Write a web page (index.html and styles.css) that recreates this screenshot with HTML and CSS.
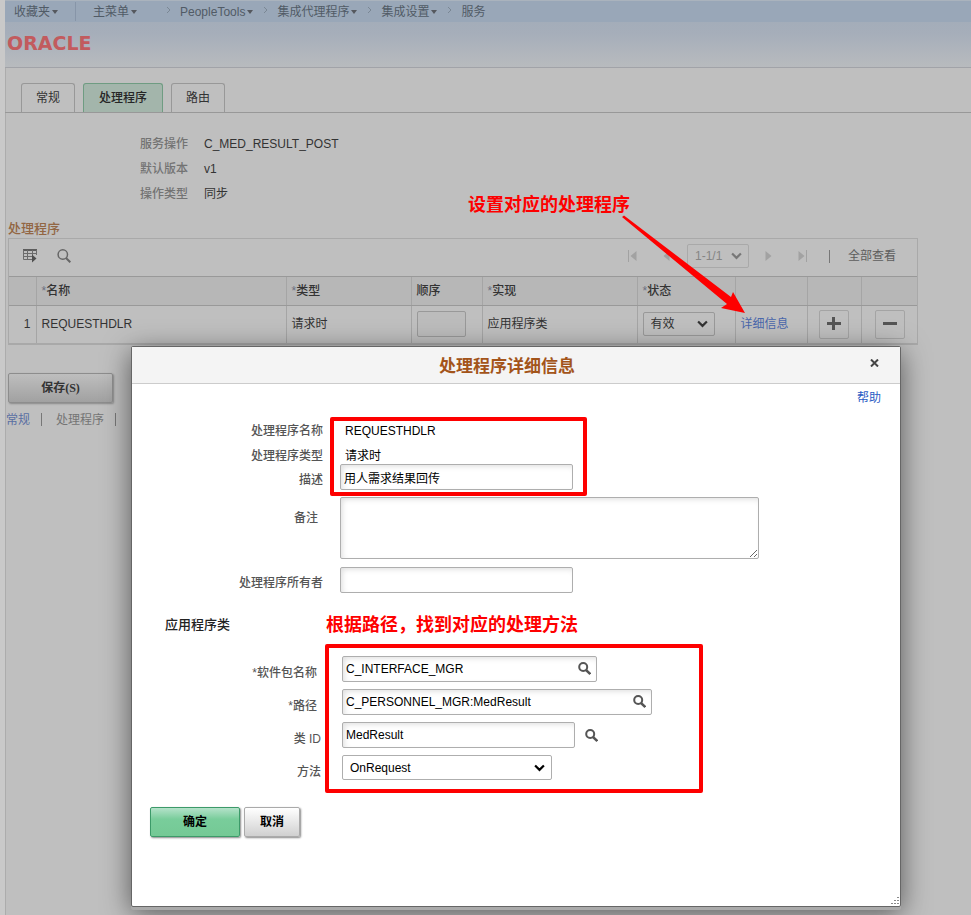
FILE: index.html
```html
<!DOCTYPE html>
<html lang="zh-CN">
<head>
<meta charset="utf-8">
<title>服务操作 - 处理程序</title>
<link rel="stylesheet" href="styles.css">
</head>
<body>
<div class="page">
  <header class="banner">
    <nav class="crumbs">
      <a class="crumb crumb-fav" href="#">收藏夹<i class="caret"></i></a>
      <a class="crumb crumb-main" href="#">主菜单<i class="caret"></i></a>
      <svg class="sep" viewBox="0 0 5 8"><path d="M1 1l3 3-3 3"/></svg>
      <a class="crumb" href="#">PeopleTools<i class="caret"></i></a>
      <svg class="sep" viewBox="0 0 5 8"><path d="M1 1l3 3-3 3"/></svg>
      <a class="crumb" href="#">集成代理程序<i class="caret"></i></a>
      <svg class="sep" viewBox="0 0 5 8"><path d="M1 1l3 3-3 3"/></svg>
      <a class="crumb" href="#">集成设置<i class="caret"></i></a>
      <svg class="sep" viewBox="0 0 5 8"><path d="M1 1l3 3-3 3"/></svg>
      <a class="crumb" href="#">服务</a>
    </nav>
    <div class="logo">ORACLE</div>
  </header>

  <nav class="tabs">
    <a class="tab" href="#">常规</a>
    <a class="tab tab-active" href="#">处理程序</a>
    <a class="tab" href="#">路由</a>
  </nav>

  <main class="content">
    <dl class="summary">
      <dt>服务操作</dt><dd>C_MED_RESULT_POST</dd>
      <dt>默认版本</dt><dd>v1</dd>
      <dt>操作类型</dt><dd>同步</dd>
    </dl>

    <h2 class="grid-title">处理程序</h2>
    <section class="grid-box">
      <div class="toolbar">
        <button class="icon-btn" aria-label="网格操作">
          <svg width="14" height="14" viewBox="0 0 14 14"><path fill="#5d5d5d" d="M0 0h14v2H0z"/><path d="M.5 1v9.500h9M.5 4.500h13M.5 7.500h9M4.500 1v9.500M9.500 1v6M13.500 1v5" fill="none" stroke="#6c6c6c"/><path fill="#4f4f4f" d="M9 5.500l4.500 4-4.500 4z"/></svg>
        </button>
        <button class="icon-btn" aria-label="查找">
          <svg width="14" height="14" viewBox="0 0 14 14" fill="none" stroke="#666" stroke-width="1.500"><circle cx="5.800" cy="5.500" r="4.700"/><path d="M9 9l4.300 4.300" stroke-width="2"/></svg>
        </button>
        <div class="pager">
          <button class="icon-btn" aria-label="第一页" disabled><svg width="9" height="12" viewBox="0 0 9 12" fill="#a2a2a2"><path d="M0 0h1v12H0zM8.500 1v10L2.500 6z"/></svg></button>
          <button class="icon-btn" aria-label="上一页" disabled><svg width="7" height="12" viewBox="0 0 7 12" fill="#a2a2a2"><path d="M6.500 1v10L.5 6z"/></svg></button>
          <span class="select select-page">
            <select aria-label="行范围" disabled><option>1-1/1</option></select>
            <svg class="chev" viewBox="0 0 10 7"><path d="M1 1.200l4 4 4-4"/></svg>
          </span>
          <button class="icon-btn" aria-label="下一页" disabled><svg width="7" height="12" viewBox="0 0 7 12" fill="#a2a2a2"><path d="M.5 1v10l6-5z"/></svg></button>
          <button class="icon-btn" aria-label="最后一页" disabled><svg width="9" height="12" viewBox="0 0 9 12" fill="#a2a2a2"><path d="M8 0h1v12H8zM.5 1v10l6-5z"/></svg></button>
          <i class="bar"></i>
          <span class="view-all">全部查看</span>
        </div>
      </div>
      <table class="grid">
        <colgroup><col class="c-num"><col><col class="c-type"><col class="c-seq"><col class="c-impl"><col class="c-status"><col class="c-detail"><col class="c-add"><col class="c-del"></colgroup>
        <thead>
          <tr><th></th><th><i class="req">*</i>名称</th><th><i class="req">*</i>类型</th><th>顺序</th><th><i class="req">*</i>实现</th><th><i class="req">*</i>状态</th><th></th><th></th><th></th></tr>
        </thead>
        <tbody>
          <tr>
            <td class="num">1</td><td>REQUESTHDLR</td><td>请求时</td>
            <td><input class="seq" type="text" aria-label="顺序"></td>
            <td>应用程序类</td>
            <td><span class="select select-status"><select aria-label="状态"><option>有效</option></select><svg class="chev" viewBox="0 0 10 7"><path d="M1 1.200l4 4 4-4"/></svg></span></td>
            <td><a class="detail" href="#">详细信息</a></td>
            <td class="act"><button class="row-btn" aria-label="添加行"><svg width="14" height="14" viewBox="0 0 14 14"><path fill="#555" d="M5 0h3v5h6v3H8v5H5V8H0V5h5z"/></svg></button></td>
            <td class="act"><button class="row-btn" aria-label="删除行"><svg width="14" height="14" viewBox="0 0 14 14"><path fill="#555" d="M0 5h14v3H0z"/></svg></button></td>
          </tr>
        </tbody>
      </table>
    </section>

    <button class="save">保存(S)</button>
    <nav class="foot-links"><a href="#">常规</a><i class="bar"></i><span>处理程序</span><i class="bar"></i></nav>
  </main>
</div>

<section class="dialog" role="dialog" aria-labelledby="dlg-title">
  <header class="dlg-head">
    <h1 id="dlg-title">处理程序详细信息</h1>
    <button class="close" aria-label="关闭"><svg width="9" height="8" viewBox="0 0 9 8"><path d="M1 .5l7 7M8 .5l-7 7" stroke="#444" stroke-width="2"/></svg></button>
  </header>
  <div class="help"><a href="#">帮助</a></div>
  <form class="form">
    <div class="row row-text"><span class="label">处理程序名称</span><span class="value">REQUESTHDLR</span></div>
    <div class="row row-text"><span class="label">处理程序类型</span><span class="value">请求时</span></div>
    <div class="row row-desc"><label class="label" for="desc">描述</label><input class="field w-mid" id="desc" type="text" value="用人需求结果回传"></div>
    <div class="row row-notes"><label class="label label-notes" for="notes">备注</label><textarea class="field notes" id="notes"></textarea></div>
    <div class="row"><label class="label" for="owner">处理程序所有者</label><input class="field w-mid" id="owner" type="text"></div>

    <div class="section-line"><h2>应用程序类</h2><strong class="note">根据路径，找到对应的处理方法</strong></div>

    <div class="class-fields">
      <div class="row"><label class="label label-req" for="pkg">*软件包名称</label><span class="lookup w-pkg"><input class="field" id="pkg" type="text" value="C_INTERFACE_MGR"><button type="button" class="icon-btn look" aria-label="查找软件包"><svg width="13" height="13" viewBox="0 0 13 13" fill="none" stroke="#555"><circle cx="5.200" cy="5" r="4" stroke-width="2"/><path d="M8 8l4.300 4" stroke-width="2.400"/></svg></button></span></div>
      <div class="row"><label class="label label-req" for="path">*路径</label><span class="lookup w-path"><input class="field" id="path" type="text" value="C_PERSONNEL_MGR:MedResult"><button type="button" class="icon-btn look" aria-label="查找路径"><svg width="13" height="13" viewBox="0 0 13 13" fill="none" stroke="#555"><circle cx="5.200" cy="5" r="4" stroke-width="2"/><path d="M8 8l4.300 4" stroke-width="2.400"/></svg></button></span></div>
      <div class="row"><label class="label" for="cls">类 ID</label><input class="field w-mid" id="cls" type="text" value="MedResult"><button type="button" class="icon-btn look-out" aria-label="查找类"><svg width="13" height="13" viewBox="0 0 13 13" fill="none" stroke="#555"><circle cx="5.200" cy="5" r="4" stroke-width="2"/><path d="M8 8l4.300 4" stroke-width="2.400"/></svg></button></div>
      <div class="row"><label class="label" for="method">方法</label><span class="select select-method"><select id="method"><option>OnRequest</option></select><svg class="chev" viewBox="0 0 10 7"><path d="M1 1.200l4 4 4-4"/></svg></span></div>
    </div>

    <div class="buttons"><button type="button" class="btn ok">确定</button><button type="button" class="btn cancel">取消</button></div>
  </form>
  <div class="mark mark-desc"></div>
  <div class="mark mark-class"></div>
  <svg class="grip" width="9" height="9" viewBox="0 0 9 9" fill="#8a8a8a"><path d="M7 1h2v1H7zM4 4h2v1H4zM7 4h2v1H7zM1 7h2v1H1zM4 7h2v1H4zM7 7h2v1H7z"/></svg>
</section>

<div class="callout">
  <strong class="note">设置对应的处理程序</strong>
  <svg class="arrow" width="124" height="98" viewBox="0 0 124 98"><path fill="#fe0000" d="M1 2L3 .5 110 82l2-5 12 21-24-5 6-4z"/></svg>
</div>
</body>
</html>
```
FILE: styles.css
```css
* { box-sizing: border-box; }

body {
  margin: 0;
  position: relative;
  min-height: 100vh;
  overflow: hidden;
  background: #bfbfbf;
  color: #333;
  font: 12px/16px "Liberation Sans", "Noto Sans CJK SC", sans-serif;
}

button, input, select, textarea { font: inherit; color: inherit; margin: 0; }
a { text-decoration: none; color: inherit; }
h1, h2, dl, dd { margin: 0; }
i { font-style: normal; }

.page {
  min-height: 100vh;
  border-left: 5px solid #c9c9c9;
  box-shadow: inset 1px 0 0 #acacac;
}

/* banner */
.banner {
  height: 68px;
  border-bottom: 1px solid #a1a3a8;
  background: linear-gradient(#9fabb8, #a6aeba 50%, #b8bbbe);
}
.crumbs {
  display: flex;
  align-items: center;
  height: 22px;
  border-top: 1px solid #aab3bd;
  background: #99a7b8;
  color: #515b66;
}
.crumb { display: flex; align-items: center; gap: 2px; white-space: nowrap; }
.crumb-fav { width: 71px; height: 19px; padding-left: 9px; border-right: 1px solid #8795a8; }
.crumb-main { margin: 0 19px 0 17px; }
.caret { border: 3px solid transparent; border-top: 4px solid #55585e; border-bottom: 0; }
.sep { width: 5px; height: 8px; margin: 0 9px 4px 10px; fill: none; stroke: #7a8794; }
.logo {
  padding: 10px 2px;
  color: #c25b5e;
  font: bold 19px/22px "DejaVu Sans", sans-serif;
}

/* tabs */
.tabs {
  display: flex;
  align-items: flex-end;
  gap: 8px;
  height: 45px;
  padding-left: 16px;
  border-bottom: 1px solid #989898;
}
.tab {
  padding: 6px 14px;
  border: 1px solid #989898;
  border-bottom: 0;
  border-radius: 3px 3px 0 0;
}
.tab-active { background: #a3b5ab; border-color: #6f9c82; font-weight: 500; padding: 6px 15px; color: #262626; }

.content { padding: 23px 53px 0 3px; }
.summary { display: grid; grid-template-columns: 180px 1fr; column-gap: 16px; line-height: 17px; row-gap: 8px; }
.summary dt { text-align: right; color: #737373; font-weight: 500; }

/* handler grid */
.grid-title { margin-top: 17px; color: #926643; font-size: 13px; line-height: 18px; font-weight: 500; }
.grid-box { border: 1px solid #a9a9a9; border-bottom-width: 2px; }
.toolbar { display: flex; align-items: center; gap: 20px; height: 37px; padding: 0 21px 3px 14px; color: #5d5d5d; }
.icon-btn { display: flex; padding: 0; border: 0; background: none; }
.toolbar > .icon-btn { width: 14px; }
.pager { display: flex; align-items: center; margin-left: auto; gap: 18px; }
.pager .icon-btn { width: 16px; justify-content: center; }
.bar { width: 1px; height: 13px; background: #777; }
.view-all { line-height: 18px; }

.grid { width: 100%; table-layout: fixed; border-collapse: collapse; }
.c-num { width: 27px; }
.c-type { width: 125px; }
.c-seq { width: 71px; }
.c-impl { width: 155px; }
.c-status { width: 98px; }
.c-detail { width: 72px; }
.c-add { width: 54px; }
.c-del { width: 56px; }
.grid th, .grid td { padding: 0 5px; text-align: left; border-left: 1px solid #a5a5a5; }
.grid th:first-child, .grid td:first-child { border-left: 0; }
.grid th { height: 29px; background: #b7b7b7; font-weight: 500; border-top: 1px solid #999; border-bottom: 1px solid #999; }
.grid td { height: 37px; }
.grid td.num { text-align: right; }
.grid td.act { text-align: right; padding-right: 12px; }
.req { color: #6b7080; font-weight: 400; }
.seq { display: block; width: 49px; height: 26px; border: 1px solid #999; border-radius: 2px; background: #bcbcbc; }
.detail { color: #4a67ab; }
.row-btn { display: inline-flex; align-items: center; justify-content: center; width: 30px; height: 29px; padding: 0; border: 1px solid #a4a4a4; border-radius: 2px; background: none; vertical-align: middle; }

/* drop-downs */
.select { position: relative; display: inline-flex; vertical-align: middle; }
.select select { appearance: none; width: 100%; height: 100%; padding: 0 7px; border: 1px solid #999; border-radius: 2px; background: none; opacity: 1; }
.chev { position: absolute; right: 7px; top: 50%; width: 11px; height: 8px; margin-top: -4px; fill: none; stroke: #333; stroke-width: 2; pointer-events: none; }
.select-page { width: 62px; height: 24px; margin: 0 -6px; color: #858585; }
.select-page select { border-color: #a9a9a9; }
.select-page .chev { stroke: #777; }
.select-status { width: 72px; height: 24px; }

.save {
  display: block;
  width: 105px;
  height: 30px;
  margin-top: 28px;
  border: 1px solid #8d8d8d;
  border-radius: 2px;
  background: linear-gradient(#bebebe, #a1a1a1);
  box-shadow: 1px 1px 2px #888;
  font: bold 12px/16px "Liberation Serif", "Noto Sans CJK SC", serif;
}
.foot-links { display: flex; align-items: center; margin: 9px 0 0 -2px; color: #747474; }
.foot-links a { color: #5a6fa3; }
.foot-links .bar { margin: 0 14px 0 11px; }

/* dialog */
.dialog {
  position: absolute;
  top: 346px;
  left: 131px;
  right: 70px;
  min-height: 561px;
  border: 1px solid #666;
  border-radius: 2px;
  background: #fff;
  color: #000;
  box-shadow: 0 3px 0 #aaa, 0 6px 28px rgba(0, 0, 0, .55);
}
.dlg-head { display: flex; align-items: center; height: 37px; padding: 0 21px 0 12px; border-bottom: 1px solid #ccc; background: #f4f4f4; }
.dlg-head h1 { flex: 1; padding-top: 4px; text-align: center; font-size: 17px; line-height: 24px; color: #a3541a; font-weight: 700; }
.close { display: flex; padding: 0; border: 0; background: none; margin-bottom: 4px; }
.help { padding: 6px 19px 0; text-align: right; color: #2a5cc4; }
.form { padding-top: 12px; }
.row { display: flex; align-items: center; margin-bottom: 8px; }
.row .label { width: 191px; margin-right: 17px; padding-top: 5px; text-align: right; color: #555; font-weight: 500; }
.row-text { height: 25px; margin: 0; }
.row-text .label { padding-top: 0; }
.row-text .value { padding-left: 5px; }
.row-desc { margin: -4px 0 7px; }
.field {
  height: 26px;
  padding: 0 3px;
  border: 1px solid #aeaeae;
  border-radius: 2px;
  background: #fff;
  box-shadow: inset 0 5px 6px -4px #ddd, inset 5px 0 6px -4px #ddd;
}
.w-mid { width: 233px; }
.row-notes { align-items: flex-start; }
.row .label-notes { padding-top: 13px; padding-right: 5px; }
.notes { width: 419px; height: 62px; resize: both; }
.section-line { display: flex; align-items: center; margin: 20px 0 19px 33px; height: 24px; }
.section-line h2 { width: 161px; font-size: 13px; line-height: 20px; font-weight: 500; color: #222; }
.note { color: #fe0000; font-size: 18px; line-height: 26px; font-weight: 700; white-space: nowrap; }
.class-fields .row { margin-bottom: 7px; }
.class-fields .label { width: 189px; margin-right: 21px; padding-top: 8px; }
.row .label-req { padding-right: 4px; }
.lookup { position: relative; display: flex; }
.lookup .field { width: 100%; }
.look { position: absolute; right: 6px; top: 6px; }
.look-out { margin-left: 10px; }
.w-pkg { width: 255px; }
.w-path { width: 310px; }
.select-method { width: 210px; height: 25px; }
.select-method select { border-color: #aeaeae; }
.select-method .chev { stroke: #000; }

.buttons { display: flex; gap: 4px; margin: 27px 0 0 18px; }
.btn { height: 30px; padding: 0; border-radius: 2px; font-weight: 700; box-shadow: 1px 1px 2px #888; }
.ok { width: 90px; border: 1px solid #3c9a69; background: linear-gradient(#b5e2ca, #79cd9b 40%, #74c995); }
.cancel { width: 56px; border: 1px solid #aaa; background: linear-gradient(#fff, #d0d0d0); }

/* annotations laid over the screen */
.mark { position: absolute; border: 4px solid #fe0000; border-radius: 2px; pointer-events: none; }
.mark-desc { left: 198px; top: 70px; width: 257px; height: 79px; }
.mark-class { left: 193px; top: 297px; width: 378px; height: 149px; }
.grip { position: absolute; right: 1px; bottom: 1px; }
.callout { position: absolute; left: 468px; top: 192px; pointer-events: none; }
.arrow { position: absolute; left: 153px; top: 23px; }
```
